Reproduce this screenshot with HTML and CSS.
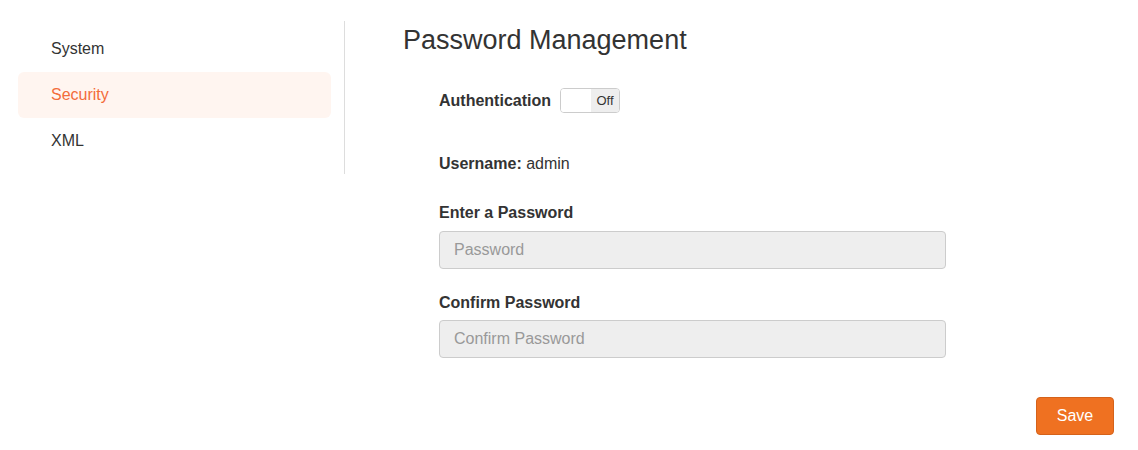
FILE: index.html
```html
<!DOCTYPE html>
<html>
<head>
<meta charset="utf-8">
<link rel="stylesheet" href="styles.css">
</head>
<body>
<div class="page">
  <aside class="sidebar">
    <nav class="nav">
      <div class="nav-item">System</div>
      <div class="nav-item active">Security</div>
      <div class="nav-item">XML</div>
    </nav>
  </aside>
  <main class="main">
    <h1 class="title">Password Management</h1>
    <div class="form">
      <div class="auth-row">
        <span class="label">Authentication</span>
        <span class="toggle"><span class="toggle-knob"></span><span class="toggle-off">Off</span></span>
      </div>
      <div class="user-row"><span class="label">Username:</span> admin</div>
      <div class="field">
        <label class="label field-label">Enter a Password</label>
        <input class="input" type="password" placeholder="Password">
      </div>
      <div class="field field-2">
        <label class="label field-label">Confirm Password</label>
        <input class="input" type="password" placeholder="Confirm Password">
      </div>
    </div>
    <div class="actions">
      <button class="btn-save">Save</button>
    </div>
  </main>
</div>
</body>
</html>
```

FILE: styles.css
```css
* { box-sizing: border-box; }
html, body { margin: 0; padding: 0; background: #fff; }
body {
  font-family: "Liberation Sans", Arial, sans-serif;
  color: #333;
  font-size: 16px;
}
.page {
  display: flex;
  align-items: flex-start;
  width: 1138px;
  height: 450px;
}
.sidebar {
  width: 345px;
  flex: none;
  margin-top: 21px;
  padding: 5px 13px 10px 18px;
  border-right: 1px solid #ddd;
}
.nav { display: flex; flex-direction: column; }
.nav-item {
  height: 46px;
  line-height: 46px;
  padding-left: 33px;
  border-radius: 6px;
  color: #333;
  font-size: 16px;
}
.nav-item.active {
  background: #fff5f0;
  color: #f36c3b;
}
.main {
  flex: 1;
  padding: 0 24px 0 58px;
  display: flex;
  flex-direction: column;
}
.title {
  margin: 25px 0 0 0;
  font-size: 27px;
  font-weight: normal;
  line-height: 30px;
  color: #333;
}
.form {
  padding-left: 36px;
  display: flex;
  flex-direction: column;
}
.label { font-weight: bold; color: #333; }
.auth-row {
  margin-top: 33px;
  display: flex;
  align-items: center;
  height: 25px;
}
.toggle {
  margin-left: 9px;
  width: 60px;
  height: 25px;
  border: 1px solid #ccc;
  border-radius: 4px;
  display: flex;
  overflow: hidden;
  background: #fff;
}
.toggle-knob { width: 30px; background: #fff; }
.toggle-off {
  flex: 1;
  background: #eee;
  font-size: 13px;
  line-height: 23px;
  text-align: center;
  color: #333;
}
.user-row {
  margin-top: 41px;
  line-height: 20px;
}
.field { display: flex; flex-direction: column; margin-top: 29px; }
.field-2 { margin-top: 24px; }
.field-label { line-height: 20px; margin-bottom: 8px; }
.field-2 .field-label { margin-bottom: 7px; }
.input {
  width: 507px;
  height: 38px;
  border: 1px solid #ccc;
  border-radius: 4px;
  background: #eee;
  padding: 0 14px;
  font-family: "Liberation Sans", Arial, sans-serif;
  font-size: 16px;
  color: #333;
  outline: none;
}
.input::placeholder { color: #999; }
.actions {
  display: flex;
  justify-content: flex-end;
  margin-top: 39px;
}
.btn-save {
  width: 78px;
  height: 38px;
  background: #ef7121;
  border: 1px solid #d5621a;
  border-radius: 4px;
  color: #fff;
  font-family: "Liberation Sans", Arial, sans-serif;
  font-size: 16px;
  padding: 0;
}
```
